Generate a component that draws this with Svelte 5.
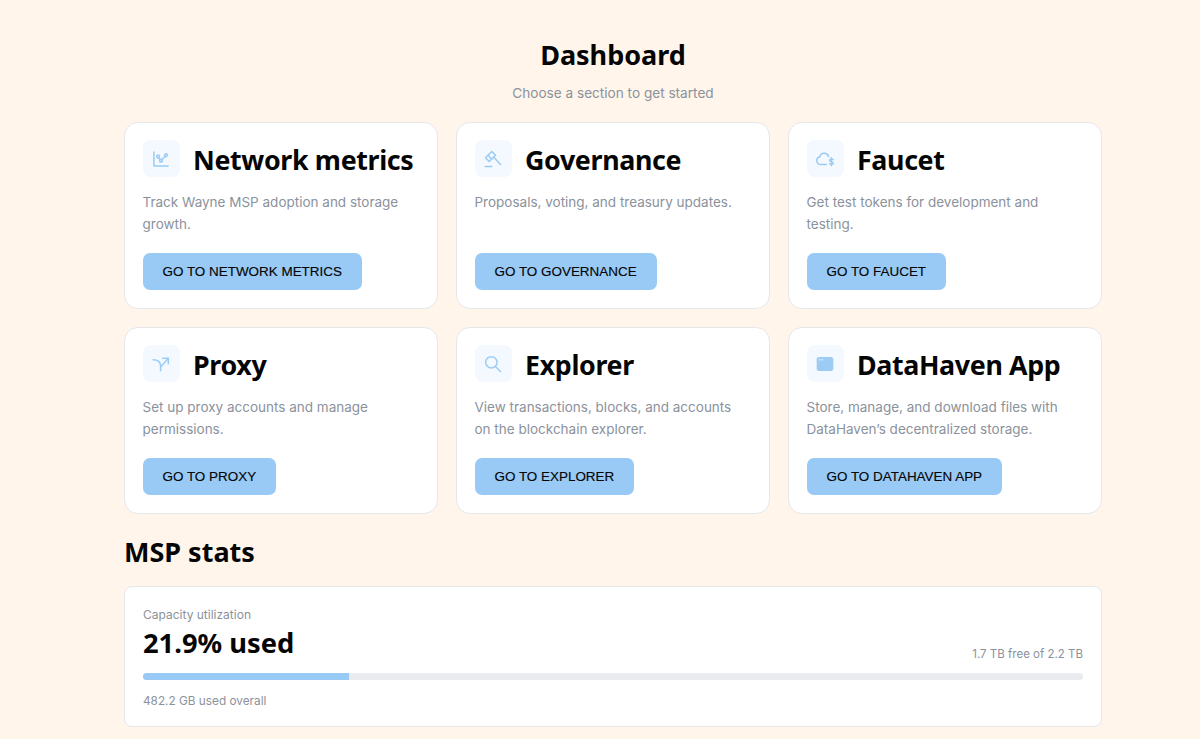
<script>
  const cards = [
    { t: 'Network metrics', d: 'Track Wayne MSP adoption and storage growth.', b: 'GO TO NETWORK METRICS', i: 'chart' },
    { t: 'Governance', d: 'Proposals, voting, and treasury updates.', b: 'GO TO GOVERNANCE', i: 'gavel' },
    { t: 'Faucet', d: 'Get test tokens for development and testing.', b: 'GO TO FAUCET', i: 'cloud' },
    { t: 'Proxy', d: 'Set up proxy accounts and manage permissions.', b: 'GO TO PROXY', i: 'split' },
    { t: 'Explorer', d: 'View transactions, blocks, and accounts on the blockchain explorer.', b: 'GO TO EXPLORER', i: 'search' },
    { t: 'DataHaven App', d: 'Store, manage, and download files with DataHaven’s decentralized storage.', b: 'GO TO DATAHAVEN APP', i: 'app' }
  ];
</script>

<main class="page">
  <header class="head">
    <h1>Dashboard</h1>
    <p>Choose a section to get started</p>
  </header>

  <section class="grid">
    {#each cards as c}
      <article class="card">
        <div class="top">
          <span class="ico">
            <svg viewBox="0 0 24 24" width="20" height="20" fill="none" stroke="#9ccbf4" stroke-width="1.8" stroke-linecap="round" stroke-linejoin="round">
              {#if c.i === 'chart'}
                <path d="M3.500 3.500v17h17" />
                <circle cx="8.500" cy="9" r="1.700" /><circle cx="12" cy="14" r="1.700" /><circle cx="18" cy="7.500" r="1.700" />
                <path d="M9.300 10.500l1.800 2.200M13 12.800l4-4" />
              {:else if c.i === 'gavel'}
                <path d="M3 10.500 10.500 3l4.500 4.500L7.500 15z" />
                <path d="M6 7.500 10.500 12M13 10l8 8.500" />
                <path d="M2.500 21h8" />
              {:else if c.i === 'cloud'}
                <path d="M13.500 18.500H6.500a4.500 4.500 0 0 1-.8-8.900A5.500 5.500 0 0 1 16.300 9" />
                <path d="M21.800 12.800c-.7-1-3.800-1.200-4.200.5-.5 2.300 4.500 1.700 4.300 4-.2 1.700-3.700 1.500-4.600.3M19.700 10.500v9.500" stroke-width="1.700" />
              {:else if c.i === 'split'}
                <path d="M2.500 7C7 7 11 9 11.500 13.500V20" /><path d="M11.500 15.500 20.500 5.500" /><path d="M14 5h6.800v6.800" />
              {:else if c.i === 'search'}
                <circle cx="10" cy="10" r="6.800" /><path d="M15.200 15.200l6 6" />
              {:else}
                <rect x="2" y="3.500" width="20" height="17" rx="3" fill="#9ccbf4" stroke="none" />
                <path d="M5 7h1.500M8 7h1.500" stroke="#e3f1fd" stroke-width="1.200" />
              {/if}
            </svg>
          </span>
          <h2>{c.t}</h2>
        </div>
        <p class="desc">{c.d}</p>
        <button class="go">{c.b}</button>
      </article>
    {/each}
  </section>

  <h2 class="stats-title">MSP stats</h2>
  <section class="stats">
    <div class="label">Capacity utilization</div>
    <div class="row">
      <div class="big">21.9% used</div>
      <div class="free">1.7 TB free of 2.2 TB</div>
    </div>
    <div class="track"><div class="fill" style="width: 21.9%"></div></div>
    <div class="overall">482.2 GB used overall</div>
  </section>
</main>

<style>
  :global(body) {
    margin: 0;
    background: #fff5eb;
    font-family: Inter, "Liberation Sans", sans-serif;
  }
  .page {
    width: 978px;
    margin: 0 auto;
    padding-left: 26px;
    height: 739px;
    overflow: hidden;
  }
  .head {
    text-align: center;
    padding-top: 36px;
    margin-bottom: 19px;
  }
  h1 {
    margin: 0;
    font: 700 27px/38px "Noto Sans", sans-serif;
    color: #050505;
  }
  .head p {
    margin: 9px 0 0;
    font-size: 13.600px;
    line-height: 20px;
    color: #8b929c;
  }
  .grid {
    display: grid;
    grid-template-columns: repeat(3, 314px);
    gap: 18px;
  }
  .card {
    box-sizing: border-box;
    height: 187px;
    background: #fff;
    border: 1px solid #e5e7eb;
    border-radius: 14px;
    padding: 17px 17.500px;
    display: flex;
    flex-direction: column;
    align-items: flex-start;
  }
  .top {
    display: flex;
    align-items: center;
    gap: 13px;
    height: 37px;
  }
  .ico {
    width: 37.500px;
    height: 37px;
    border-radius: 8px;
    background: #f3f9fe;
    display: flex;
    align-items: center;
    justify-content: center;
  }
  .top h2 {
    margin: 0;
    padding-top: 2px;
    font: 700 26.800px/39px "Noto Sans", sans-serif;
    letter-spacing: -0.350px;
    color: #050505;
    white-space: nowrap;
  }
  .desc {
    margin: 13.500px 0 0;
    max-width: 272px;
    font-size: 13.500px;
    line-height: 22px;
    height: 44px;
    color: #8b929c;
  }
  .go {
    margin-top: 18.500px;
    height: 37px;
    padding: 0 20px;
    border: 0;
    border-radius: 7px;
    background: #99caf5;
    color: #050505;
    font: 400 13.450px/37px "Liberation Sans", Arial, sans-serif;
    -webkit-text-stroke: 0.150px #050505;
    white-space: nowrap;
  }
  .stats-title {
    margin: 20px 0 16px;
    font: 700 27px/36px "Noto Sans", sans-serif;
    color: #050505;
  }
  .stats {
    box-sizing: border-box;
    width: 978px;
    height: 141px;
    background: #fff;
    border: 1px solid #e5e7eb;
    border-radius: 8px;
    padding: 20px 18px;
  }
  .label {
    font-size: 12px;
    line-height: 16px;
    color: #8b929c;
  }
  .row {
    display: flex;
    justify-content: space-between;
    align-items: flex-end;
    margin-top: 1px;
    height: 38px;
  }
  .big {
    font: 700 27.300px/38px "Noto Sans", sans-serif;
    color: #050505;
  }
  .free {
    font-size: 11.500px;
    line-height: 16px;
    color: #8b929c;
  }
  .track {
    margin-top: 11px;
    height: 7px;
    border-radius: 4px;
    background: #e9ebef;
    overflow: hidden;
  }
  .fill {
    height: 100%;
    background: #99caf5;
  }
  .overall {
    margin-top: 13px;
    font-size: 11.800px;
    line-height: 16px;
    color: #8b929c;
  }
</style>
